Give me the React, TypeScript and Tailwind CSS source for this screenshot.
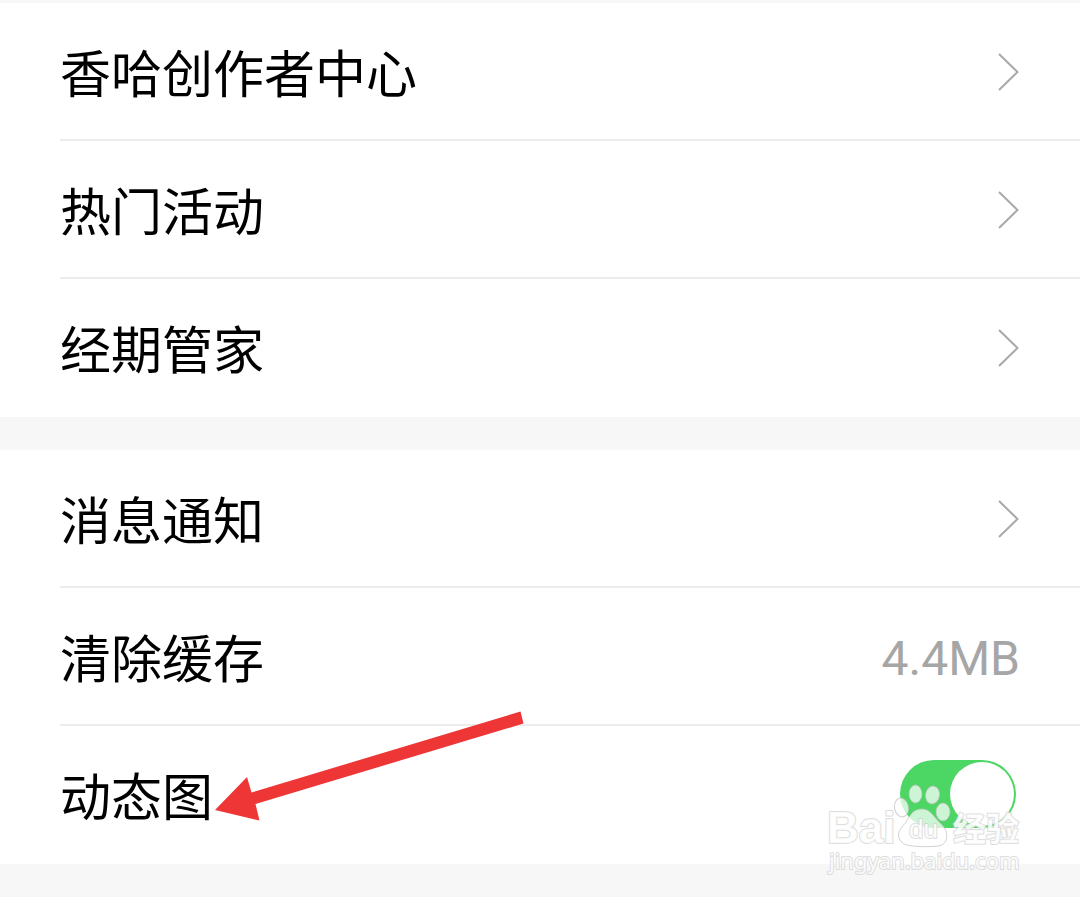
import React from 'react';

interface RowProps {
  children: React.ReactNode;
  last?: boolean;
}

const ROW = 'flex h-[136px] w-full items-center justify-between pr-[60px] text-left';

const Label: React.FC<{ children: React.ReactNode }> = ({ children }) => (
  <span className="block pt-2.5 text-[51px] leading-[60px] text-black">{children}</span>
);

const Chevron: React.FC = () => (
  <svg width="24" height="40" viewBox="0 0 24 40" fill="none" stroke="#a9a9a9" strokeWidth="2" aria-hidden="true">
    <path d="M3 3 L21.500 21 L3 39" />
  </svg>
);

const Item: React.FC<RowProps> = ({ children, last }) => (
  <li className={`relative border-b-2 ${last ? 'border-transparent' : 'border-[#ececec]'}`}>{children}</li>
);

const LinkRow: React.FC<{ label: string; last?: boolean }> = ({ label, last }) => (
  <Item last={last}>
    <a href="#" className={ROW}>
      <Label>{label}</Label>
      <Chevron />
    </a>
  </Item>
);

const Arrow: React.FC = () => (
  <svg
    className="pointer-events-none absolute -top-4 left-[154px]"
    width="312"
    height="114"
    viewBox="214 710 312 114"
    aria-hidden="true"
  >
    <path d="M215 810 L247 777 L251.500 792.500 L520.500 711.500 L523.500 723.500 L255.500 804 L259.500 820.500 Z" fill="#ee3637" />
  </svg>
);

const Watermark: React.FC = () => (
  <svg
    className="pointer-events-none absolute right-[54px] top-[54px]"
    width="204"
    height="98"
    viewBox="822 780 204 98"
    aria-hidden="true"
  >
    <g fill="#ffffff" fillOpacity="0.72" stroke="#bdbdbd" strokeOpacity="0.7" strokeWidth="1">
      <ellipse cx="901.500" cy="807.500" rx="7" ry="9.500" transform="rotate(-12 901.500 807.500)" />
      <ellipse cx="915.500" cy="794" rx="6.500" ry="9" />
      <ellipse cx="932.500" cy="795" rx="7" ry="9" transform="rotate(10 932.500 795)" />
      <ellipse cx="943" cy="812" rx="7" ry="9" />
      <path d="M913 812 C918 808 926 808 930 812 C935 817 938 821 943 826 C949 833 948 845 938 846 C931 847 914 847 907 845 C898 843 896 833 902 827 C907 822 908 817 913 812 Z" />
    </g>
    <g
      fill="#ffffff"
      fillOpacity="0.9"
      stroke="#cfcfcf"
      strokeOpacity="0.7"
      strokeWidth="2"
      strokeLinejoin="round"
      style={{ paintOrder: 'stroke' }}
    >
      <text x="827" y="843" fontFamily="Liberation Sans, sans-serif" fontWeight="700" fontSize="44">Bai</text>
      <text x="909" y="838" fontFamily="Liberation Sans, sans-serif" fontSize="26">du</text>
      <text x="953" y="841" fontFamily="Noto Sans CJK SC, sans-serif" fontWeight="700" fontSize="33">经验</text>
      <text x="829" y="869" fontFamily="Noto Sans, sans-serif" fontSize="22">jingyan.baidu.com</text>
    </g>
  </svg>
);

const App: React.FC = () => (
  <main className="bg-white pb-[2px] font-[Roboto,'Noto_Sans_CJK_SC',sans-serif]">
    <div className="h-[3px] bg-[#f7f7f7]" />

    <ul className="pl-[60px]">
      <LinkRow label="香哈创作者中心" />
      <LinkRow label="热门活动" />
      <LinkRow label="经期管家" last />
    </ul>

    <div className="h-[33px] bg-[#f7f7f7]" />

    <ul className="pl-[60px]">
      <LinkRow label="消息通知" />
      <Item>
        <button type="button" className={ROW}>
          <Label>清除缓存</Label>
          <span className="pt-1.5 text-[48px] leading-[60px] text-[#a6a6a6]">4.4MB</span>
        </button>
      </Item>
      <Item last>
        <div className={ROW}>
          <label htmlFor="animated">
            <Label>动态图</Label>
          </label>
          <input
            id="animated"
            type="checkbox"
            role="switch"
            defaultChecked
            className="mr-1 h-[68px] w-[116px] appearance-none rounded-full bg-[#d9d9d9] p-[2px] before:block before:size-16 before:rounded-full before:bg-white checked:bg-[#4cd664] checked:before:ml-auto"
          />
        </div>
        <Arrow />
        <Watermark />
      </Item>
    </ul>

    <div className="h-[33px] bg-[#f7f7f7]" />
  </main>
);

export default App;
